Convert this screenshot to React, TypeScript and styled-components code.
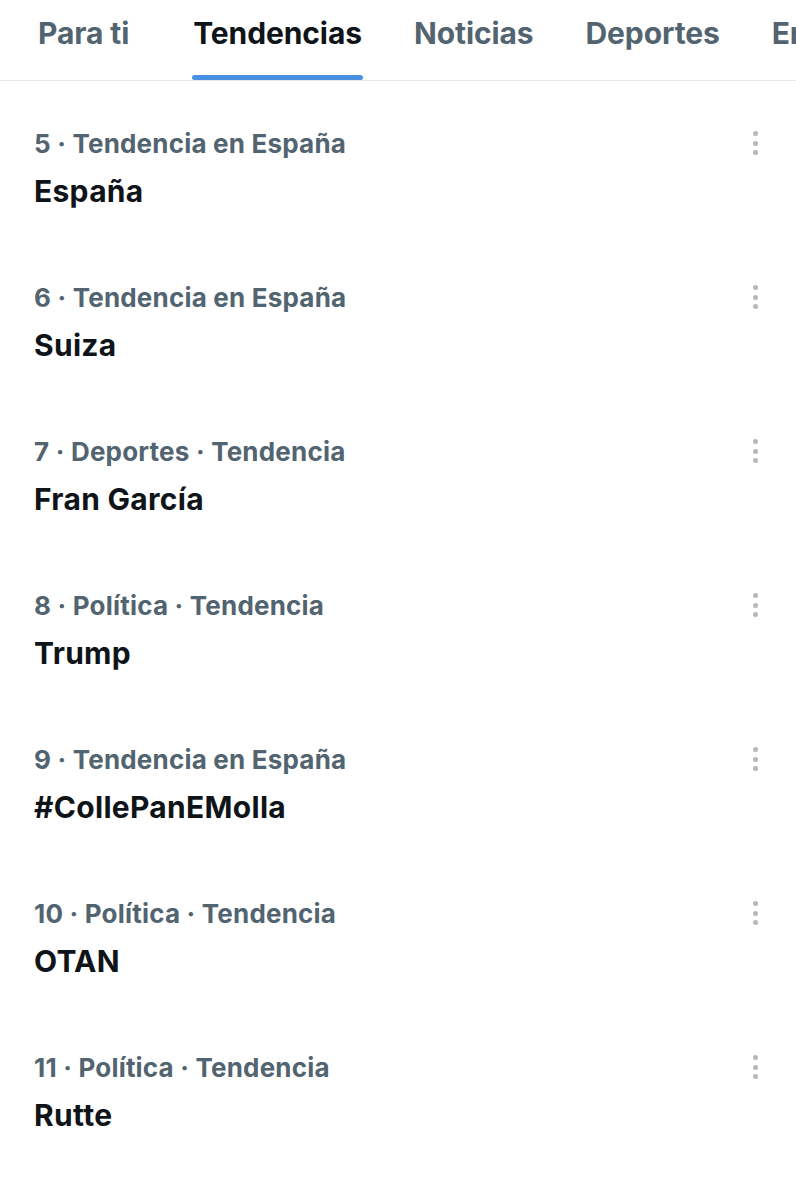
import * as React from "react";
import styled, { createGlobalStyle } from "styled-components";

const GlobalStyle = createGlobalStyle`
  html, body {
    margin: 0;
    padding: 0;
    background: #fff;
  }
  body {
    font-family: "Inter", "Roboto", "Liberation Sans", sans-serif;
    -webkit-font-smoothing: antialiased;
  }
`;

const Page = styled.div`
  width: 796px;
  overflow: hidden;
  background: #fff;
`;

const TabBar = styled.nav`
  display: flex;
  height: 80px;
  padding-left: 12px;
  border-bottom: 1px solid #e4e6e8;
  white-space: nowrap;
`;

const Tab = styled.div<{ $active?: boolean }>`
  position: relative;
  flex: none;
  display: flex;
  align-items: center;
  padding: 0 26px 14px;
  font-size: 30px;
  font-weight: 700;
  letter-spacing: -0.1px;
  color: ${(p) => (p.$active ? "#0f1419" : "#536471")};

  &:first-child {
    margin-right: 12px;
  }

  &::after {
    content: "";
    display: ${(p) => (p.$active ? "block" : "none")};
    position: absolute;
    left: 25px;
    right: 25px;
    bottom: 0;
    height: 5px;
    border-radius: 3px;
    background: #4a90e2;
  }
`;

const List = styled.ul`
  list-style: none;
  margin: 0;
  padding: 22px 0 0;
`;

const Row = styled.li`
  position: relative;
  display: flex;
  flex-direction: column;
  padding: 22px 34px 46px;
`;

const Meta = styled.div`
  font-size: 26px;
  line-height: 38px;
  font-weight: 700;
  color: #536471;
  letter-spacing: 0.2px;
`;

const Title = styled.div`
  margin-top: 8px;
  font-size: 30px;
  line-height: 40px;
  font-weight: 700;
  color: #0f1419;
  letter-spacing: 0.3px;
`;

const More = styled.button`
  position: absolute;
  top: 25px;
  right: 29px;
  width: 24px;
  height: 30px;
  padding: 0;
  border: 0;
  background: none;
  display: flex;
  flex-direction: column;
  align-items: center;
  justify-content: center;
  gap: 4.6px;

  span {
    display: block;
    width: 5px;
    height: 5px;
    border-radius: 50%;
    background: #b4b8bc;
  }
`;

const tabs = ["Para ti", "Tendencias", "Noticias", "Deportes", "Entretenimiento"];

const trends = [
  { meta: "5 · Tendencia en España", title: "España" },
  { meta: "6 · Tendencia en España", title: "Suiza" },
  { meta: "7 · Deportes · Tendencia", title: "Fran García" },
  { meta: "8 · Política · Tendencia", title: "Trump" },
  { meta: "9 · Tendencia en España", title: "#CollePanEMolla" },
  { meta: "10 · Política · Tendencia", title: "OTAN" },
  { meta: "11 · Política · Tendencia", title: "Rutte" },
];

const App = () => (
  <Page>
    <GlobalStyle />
    <TabBar>
      {tabs.map((t) => (
        <Tab key={t} $active={t === "Tendencias"}>
          {t}
        </Tab>
      ))}
    </TabBar>
    <List>
      {trends.map((t) => (
        <Row key={t.title}>
          <Meta>{t.meta}</Meta>
          <Title>{t.title}</Title>
          <More aria-label="Más opciones">
            <span />
            <span />
            <span />
          </More>
        </Row>
      ))}
    </List>
  </Page>
);

export default App;
